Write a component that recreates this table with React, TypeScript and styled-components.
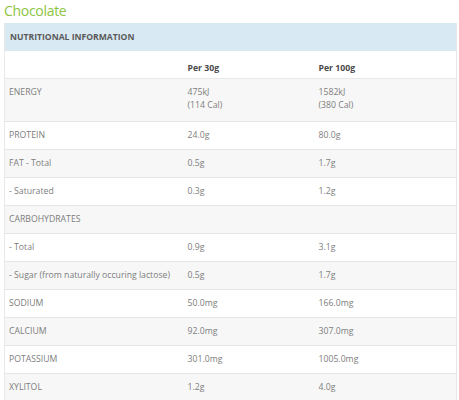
import React from "react";
import styled, { createGlobalStyle } from "styled-components";

const GlobalStyle = createGlobalStyle`
  body {
    margin: 0;
    background: #fff;
    font-family: "Open Sans", "Liberation Sans", sans-serif;
  }
`;

type Row = {
  label: string;
  per30?: string[];
  per100?: string[];
};

const rows: Row[] = [
  { label: "ENERGY", per30: ["475kJ", "(114 Cal)"], per100: ["1582kJ", "(380 Cal)"] },
  { label: "PROTEIN", per30: ["24.0g"], per100: ["80.0g"] },
  { label: "FAT - Total", per30: ["0.5g"], per100: ["1.7g"] },
  { label: "- Saturated", per30: ["0.3g"], per100: ["1.2g"] },
  { label: "CARBOHYDRATES" },
  { label: "- Total", per30: ["0.9g"], per100: ["3.1g"] },
  { label: "- Sugar (from naturally occuring lactose)", per30: ["0.5g"], per100: ["1.7g"] },
  { label: "SODIUM", per30: ["50.0mg"], per100: ["166.0mg"] },
  { label: "CALCIUM", per30: ["92.0mg"], per100: ["307.0mg"] },
  { label: "POTASSIUM", per30: ["301.0mg"], per100: ["1005.0mg"] },
  { label: "XYLITOL", per30: ["1.2g"], per100: ["4.0g"] },
];

const App: React.FC = () => {
  return (
    <Page>
      <GlobalStyle />
      <Title>Chocolate</Title>
      <Table>
        <colgroup>
          <col style={{ width: 179 }} />
          <col style={{ width: 131 }} />
          <col />
        </colgroup>
        <thead>
          <tr>
            <Caption colSpan={3}>NUTRITIONAL INFORMATION</Caption>
          </tr>
          <tr>
            <ColHead />
            <ColHead>Per 30g</ColHead>
            <ColHead>Per 100g</ColHead>
          </tr>
        </thead>
        <tbody>
          {rows.map((row, i) => {
            const tall = (row.per30?.length ?? 0) > 1;
            return (
              <BodyRow key={row.label} $shaded={i % 2 === 0}>
                <Cell $tall={tall}>{row.label}</Cell>
                <Cell $tall={tall}>
                  {row.per30?.map((v) => (
                    <div key={v}>{v}</div>
                  ))}
                </Cell>
                <Cell $tall={tall}>
                  {row.per100?.map((v) => (
                    <div key={v}>{v}</div>
                  ))}
                </Cell>
              </BodyRow>
            );
          })}
        </tbody>
      </Table>
    </Page>
  );
};

const Page = styled.div`
  padding: 0 2px 0 4px;
`;

const Title = styled.h2`
  margin: 0;
  height: 23px;
  font-size: 14px;
  line-height: 21px;
  font-weight: 400;
  letter-spacing: -0.3px;
  color: #8cc43f;
`;

const Table = styled.table`
  width: 100%;
  border-collapse: collapse;
  table-layout: fixed;
  border-left: 1px solid #e8e8e8;
  border-right: 1px solid #e8e8e8;
  font-size: 8.7px;
  color: #7d7d7d;
`;

const Caption = styled.th`
  background: #d9e9f3;
  height: 28px;
  padding: 0 5px;
  text-align: left;
  font-size: 8.6px;
  font-weight: 700;
  color: #5a5a5a;
`;

const ColHead = styled.th`
  height: 13px;
  padding: 11px 4px 3px;
  line-height: 13px;
  text-align: left;
  font-size: 8.7px;
  font-weight: 700;
  color: #4a4a4a;
  border-bottom: 1px solid #e8e8e8;
`;

const BodyRow = styled.tr<{ $shaded: boolean }>`
  background: ${(p) => (p.$shaded ? "#f7f7f7" : "#ffffff")};
  border-bottom: 1px solid #e6e6e6;
`;

const Cell = styled.td<{ $tall: boolean }>`
  padding: 7px 4px ${(p) => (p.$tall ? "9px" : "7px")};
  line-height: 13px;
  vertical-align: top;
  white-space: nowrap;
`;

export default App;
